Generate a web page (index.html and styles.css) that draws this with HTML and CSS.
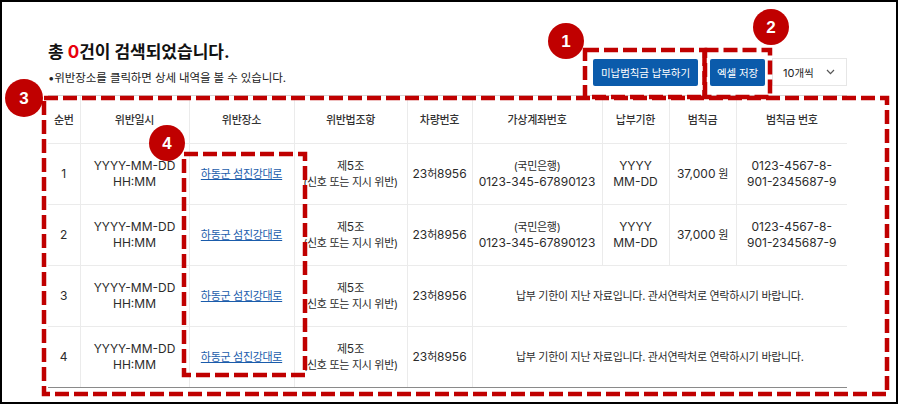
FILE: index.html
```html
<!DOCTYPE html>
<html lang="ko">
<head>
<meta charset="utf-8">
<title>검색 결과</title>
<link rel="stylesheet" href="styles.css">
</head>
<body>
<div class="page">
  <div class="toolbar">
    <div class="summary">
      <h2 class="title">총 <em class="count">0</em>건이 검색되었습니다.</h2>
      <p class="hint">•위반장소를 클릭하면 상세 내역을 볼 수 있습니다.</p>
    </div>
    <div class="actions">
      <button class="btn btn-pay" type="button">미납범칙금 납부하기</button>
      <button class="btn btn-excel" type="button">엑셀 저장</button>
      <div class="select"><span><span class="en">10</span>개씩</span>
        <svg class="chev" width="9" height="6" viewBox="0 0 9 6"><path d="M1 1 L4.5 4.6 L8 1"/></svg>
      </div>
    </div>
  </div>

  <table class="grid">
    <colgroup>
      <col class="c-no"><col class="c-date"><col class="c-place"><col class="c-law"><col class="c-car"><col class="c-acct"><col class="c-due"><col class="c-fine"><col class="c-fno">
    </colgroup>
    <thead>
      <tr><th>순번</th><th>위반일시</th><th>위반장소</th><th>위반법조항</th><th>차량번호</th><th>가상계좌번호</th><th>납부기한</th><th>범칙금</th><th>범칙금 번호</th></tr>
    </thead>
    <tbody>
      <tr>
        <td class="en">1</td>
        <td class="en">YYYY-MM-DD<br>HH:MM</td>
        <td><a class="place" href="#">하동군 섬진강대로</a></td>
        <td>제<span class="en">5</span>조<br>(신호 또는 지시 위반)</td>
        <td><span class="en">23</span>허<span class="en">8956</span></td>
        <td>(국민은행)<br><span class="en">0123-345-67890123</span></td>
        <td class="en">YYYY<br>MM-DD</td>
        <td><span class="en">37,000</span> 원</td>
        <td class="en">0123-4567-8-<br>901-2345687-9</td>
      </tr>
      <tr>
        <td class="en">2</td>
        <td class="en">YYYY-MM-DD<br>HH:MM</td>
        <td><a class="place" href="#">하동군 섬진강대로</a></td>
        <td>제<span class="en">5</span>조<br>(신호 또는 지시 위반)</td>
        <td><span class="en">23</span>허<span class="en">8956</span></td>
        <td>(국민은행)<br><span class="en">0123-345-67890123</span></td>
        <td class="en">YYYY<br>MM-DD</td>
        <td><span class="en">37,000</span> 원</td>
        <td class="en">0123-4567-8-<br>901-2345687-9</td>
      </tr>
      <tr>
        <td class="en">3</td>
        <td class="en">YYYY-MM-DD<br>HH:MM</td>
        <td><a class="place" href="#">하동군 섬진강대로</a></td>
        <td>제<span class="en">5</span>조<br>(신호 또는 지시 위반)</td>
        <td><span class="en">23</span>허<span class="en">8956</span></td>
        <td colspan="4">납부 기한이 지난 자료입니다. 관서연락처로 연락하시기 바랍니다.</td>
      </tr>
      <tr>
        <td class="en">4</td>
        <td class="en">YYYY-MM-DD<br>HH:MM</td>
        <td><a class="place" href="#">하동군 섬진강대로</a></td>
        <td>제<span class="en">5</span>조<br>(신호 또는 지시 위반)</td>
        <td><span class="en">23</span>허<span class="en">8956</span></td>
        <td colspan="4">납부 기한이 지난 자료입니다. 관서연락처로 연락하시기 바랍니다.</td>
      </tr>
    </tbody>
  </table>

  <svg class="marks" width="898" height="404" viewBox="0 0 898 404">
    <rect class="mark-box" x="585" y="50" width="120" height="47"/>
    <rect class="mark-box" x="704.5" y="50" width="65.5" height="47"/>
    <rect class="mark-box" x="44" y="98" width="843" height="296"/>
    <rect class="mark-box" x="184" y="154" width="121" height="221"/>
    <circle class="mark-dot" cx="566" cy="41" r="18"/>
    <text class="mark-num" x="566" y="41">1</text>
    <circle class="mark-dot" cx="771" cy="27" r="18"/>
    <text class="mark-num" x="771" y="27">2</text>
    <circle class="mark-dot" cx="24" cy="98" r="19"/>
    <text class="mark-num" x="24" y="98">3</text>
    <circle class="mark-dot" cx="167" cy="143" r="18"/>
    <text class="mark-num" x="167" y="143">4</text>
  </svg>
</div>
</body>
</html>
```

FILE: styles.css
```css
body {
  margin: 0;
  background: #fff;
}

.page {
  position: relative;
  width: 898px;
  height: 404px;
  box-sizing: border-box;
  border: 2px solid #000;
  padding: 39px 49px 0 46px;
  overflow: hidden;
  background: #fff;
  color: #333;
  font-family: Inter, "Noto Sans CJK KR", sans-serif;
}

.toolbar {
  display: flex;
  justify-content: space-between;
  align-items: flex-end;
}

.title {
  margin: 0;
  font-size: 17px;
  line-height: 22px;
  font-weight: 700;
  color: #111;
  letter-spacing: 0;
}

.count {
  font-style: normal;
  color: #e8000b;
}

.hint {
  margin: 7px 0 0;
  font-size: 11.5px;
  line-height: 16px;
  letter-spacing: -0.1px;
  color: #222;
}

.actions {
  display: flex;
  align-items: flex-end;
}

.btn {
  height: 27px;
  padding: 0;
  border: 0;
  border-radius: 2px;
  background: #0b5bab;
  color: #fff;
  font-family: inherit;
  font-size: 10.5px;
  letter-spacing: -0.1px;
}

.btn-pay {
  width: 105px;
}

.btn-excel {
  width: 55px;
  margin-left: 12px;
}

.select {
  width: 75px;
  height: 28px;
  box-sizing: border-box;
  margin-left: 7px;
  padding: 0 11px 0 10px;
  border: 1px solid #e6e6e6;
  display: flex;
  align-items: center;
  justify-content: space-between;
  font-size: 10.5px;
  color: #222;
}

.select .en {
  font-size: 11px;
}

.chev path {
  fill: none;
  stroke: #555;
  stroke-width: 1.2;
}

.grid {
  margin-top: 9px;
  width: 799px;
  border-collapse: collapse;
  table-layout: fixed;
  font-size: 11px;
  letter-spacing: -0.3px;
  line-height: 16px;
  text-align: center;
  color: #2b2b2b;
}

.c-no { width: 32px; }
.c-date { width: 109px; }
.c-place { width: 105px; }
.c-law { width: 113px; }
.c-car { width: 65px; }
.c-acct { width: 130px; }
.c-due { width: 67px; }
.c-fine { width: 67px; }
.c-fno { width: 111px; }

.grid th,
.grid td {
  padding: 0;
  border-left: 1px solid #ebebeb;
  border-bottom: 1px solid #ebebeb;
  white-space: nowrap;
}

.grid th:first-child,
.grid td:first-child {
  border-left: 0;
}

.grid th {
  border-top: 1px solid #d6d6d6;
  font-weight: 500;
  color: #333;
}

.grid thead tr {
  height: 48px;
}

.grid tbody tr {
  height: 61px;
}

.grid tbody tr:last-child td {
  border-bottom-color: #8a8a8a;
}

.en {
  font-size: 12px;
  letter-spacing: 0;
}

.place {
  color: #1a5cab;
  text-decoration: underline;
}

.marks {
  position: absolute;
  left: -2px;
  top: -2px;
  pointer-events: none;
}

.mark-box {
  fill: none;
  stroke: #c00000;
  stroke-width: 4.5;
  stroke-dasharray: 14 5;
}

.mark-dot {
  fill: #c00000;
}

.mark-num {
  fill: #fff;
  font-family: "Liberation Sans", Arial, sans-serif;
  font-size: 17px;
  font-weight: 700;
  text-anchor: middle;
  dominant-baseline: central;
}
```
